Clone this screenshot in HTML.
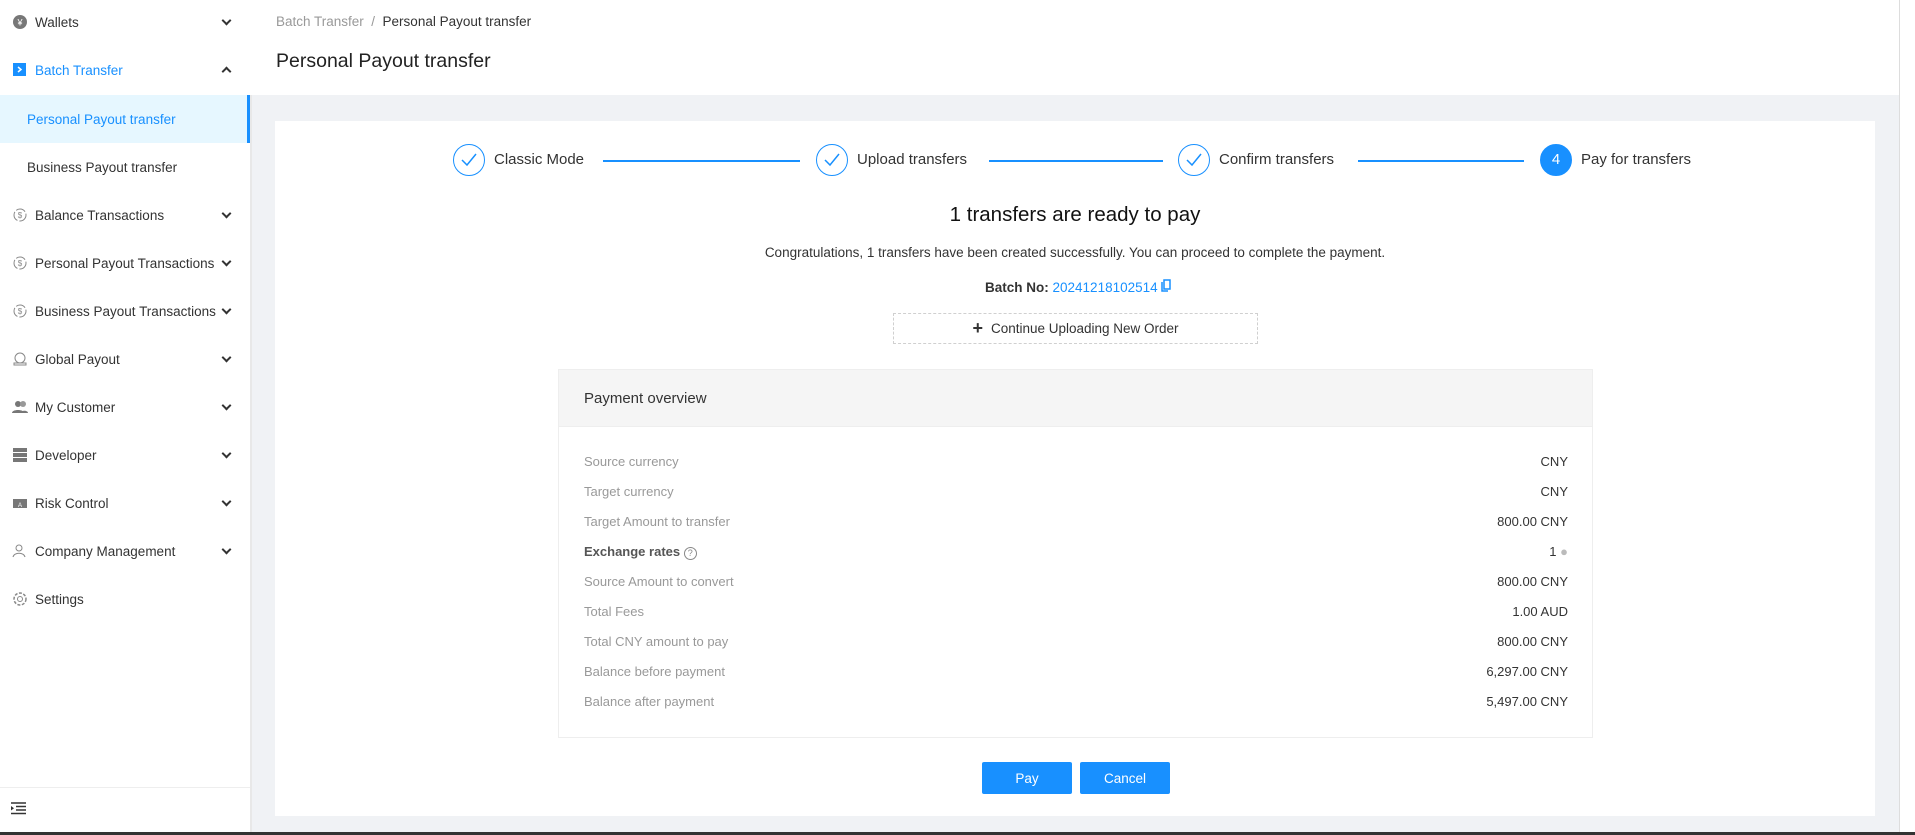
<!DOCTYPE html>
<html><head><meta charset="utf-8"><style>
*{margin:0;padding:0;box-sizing:border-box}
body{width:1915px;height:835px;overflow:hidden;background:#f0f2f5;font-family:"Liberation Sans",sans-serif;color:#262626;position:relative}
.abs{position:absolute}
#side{left:0;top:0;width:250px;height:835px;background:#fff}
.mi{position:absolute;left:0;width:250px;height:48px;display:flex;align-items:center;font-size:13.5px;color:#333}
.mi .ic{position:absolute;left:12px;width:16px;height:16px}
.mi .tx{position:absolute;left:35px}
.mi .ch{position:absolute;left:223px;top:19px;width:7px;height:7px;border-right:2px solid #333;border-bottom:2px solid #333;transform:rotate(45deg)}
.mi .ch.up{transform:rotate(-135deg);top:22px}
#hdr{left:250px;top:0;width:1649px;height:95px;background:#fff}
#card{left:275px;top:121px;width:1600px;height:695px;background:#fff}
.step{position:absolute;top:144px;width:32px;height:32px;border:1.5px solid #1890ff;border-radius:50%}
.step svg{position:absolute;left:7px;top:8px}
.sl{position:absolute;top:160px;height:1.5px;background:#1890ff}
.st{position:absolute;top:151px;font-size:15px;color:#333}
.row{position:absolute;left:584px;width:984px;font-size:13px;color:#999;display:flex;justify-content:space-between}
.row span:last-child{color:#333}
.btn{position:absolute;top:762px;width:90px;height:32px;background:#1890ff;color:#fff;font-size:13.5px;display:flex;align-items:center;justify-content:center;border-radius:2px}
</style></head><body>
<div id="side" class="abs">
 <div class="mi" style="top:-2px"><svg class="ic" viewBox="0 0 16 16"><circle cx="8" cy="8" r="7" fill="#777"/><text x="8" y="11.5" font-size="9" fill="#fff" text-anchor="middle" font-family="Liberation Sans">¥</text></svg><span class="tx">Wallets</span><span class="ch"></span></div>
 <div class="mi" style="top:46px"><svg class="ic" viewBox="0 0 16 16"><rect x="1" y="1" width="13" height="13" fill="#1890ff"/><path d="M6 5l3 2.5L6 10" stroke="#fff" stroke-width="1.5" fill="none"/></svg><span class="tx" style="color:#1890ff">Batch Transfer</span><span class="ch up"></span></div>
 <div class="mi" style="top:95px;background:#e6f7ff;border-right:3px solid #1890ff"><span class="tx" style="left:27px;color:#1890ff">Personal Payout transfer</span></div>
 <div class="mi" style="top:143px"><span class="tx" style="left:27px">Business Payout transfer</span></div>
 <div class="mi" style="top:191px"><svg class="ic" viewBox="0 0 16 16"><circle cx="8" cy="8" r="6" stroke="#888" fill="none" stroke-dasharray="10 2"/><text x="8" y="11" font-size="8" fill="#888" text-anchor="middle">$</text></svg><span class="tx">Balance Transactions</span><span class="ch"></span></div>
 <div class="mi" style="top:239px"><svg class="ic" viewBox="0 0 16 16"><circle cx="8" cy="8" r="6" stroke="#888" fill="none" stroke-dasharray="10 2"/><text x="8" y="11" font-size="8" fill="#888" text-anchor="middle">$</text></svg><span class="tx">Personal Payout Transactions</span><span class="ch"></span></div>
 <div class="mi" style="top:287px"><svg class="ic" viewBox="0 0 16 16"><circle cx="8" cy="8" r="6" stroke="#888" fill="none" stroke-dasharray="10 2"/><text x="8" y="11" font-size="8" fill="#888" text-anchor="middle">$</text></svg><span class="tx">Business Payout Transactions</span><span class="ch"></span></div>
 <div class="mi" style="top:335px"><svg class="ic" viewBox="0 0 16 16"><circle cx="8" cy="7" r="5" stroke="#888" fill="none"/><path d="M2 12h12v2H2z" stroke="#888" fill="none"/></svg><span class="tx">Global Payout</span><span class="ch"></span></div>
 <div class="mi" style="top:383px"><svg class="ic" viewBox="0 0 16 16"><circle cx="6" cy="5" r="3" fill="#777"/><circle cx="11" cy="5" r="3" fill="#999"/><path d="M0 14c0-4 12-4 12 0zM9 14c0-3 7-3 7 0z" fill="#777"/></svg><span class="tx">My Customer</span><span class="ch"></span></div>
 <div class="mi" style="top:431px"><svg class="ic" viewBox="0 0 16 16"><rect x="1" y="1" width="14" height="4" fill="#777"/><rect x="1" y="6" width="14" height="4" fill="#777"/><rect x="1" y="11" width="14" height="4" fill="#777"/></svg><span class="tx">Developer</span><span class="ch"></span></div>
 <div class="mi" style="top:479px"><svg class="ic" viewBox="0 0 16 16"><rect x="1" y="4" width="14" height="9" fill="#777"/><text x="8" y="12" font-size="6" fill="#fff" text-anchor="middle">A</text></svg><span class="tx">Risk Control</span><span class="ch"></span></div>
 <div class="mi" style="top:527px"><svg class="ic" viewBox="0 0 16 16"><circle cx="7" cy="5" r="3" stroke="#888" fill="none"/><path d="M1 14c1-5 11-5 12 0" stroke="#888" fill="none"/></svg><span class="tx">Company Management</span><span class="ch"></span></div>
 <div class="mi" style="top:575px"><svg class="ic" viewBox="0 0 16 16"><circle cx="8" cy="8" r="6" stroke="#888" stroke-width="1.5" fill="none" stroke-dasharray="3 1.5"/><circle cx="8" cy="8" r="2.5" stroke="#888" fill="none"/></svg><span class="tx">Settings</span></div>
 <div class="abs" style="left:0;top:787px;width:250px;height:1px;background:#eee"></div>
 <svg class="abs" style="left:11px;top:802px" width="16" height="13" viewBox="0 0 16 13"><path d="M0 1h15M5 4.5h10M5 8h10M0 11.5h15" stroke="#333" stroke-width="1.5"/><path d="M0 4l3 2.2L0 8.5z" fill="#333"/></svg>
</div>
<div class="abs" style="left:250px;top:0;width:2px;height:835px;background:#e8e8e8"></div>
<div id="hdr" class="abs">
 <div class="abs" style="left:26px;top:14px;font-size:13.5px;color:#999">Batch Transfer &nbsp;/&nbsp; <span style="color:#333">Personal Payout transfer</span></div>
 <div class="abs" style="left:26px;top:50px;font-size:19.5px;color:#222">Personal Payout transfer</div>
</div>
<div class="abs" style="left:1899px;top:0;width:16px;height:835px;background:#fff;border-left:1px solid #ddd"></div>
<div class="abs" style="left:0;top:832px;width:1915px;height:3px;background:#333"></div>
<div id="card" class="abs"></div>
<div class="step" style="left:453px"><svg width="16" height="14"><path d="M1 7l5 5 9-11" stroke="#1890ff" stroke-width="1.5" fill="none"/></svg></div>
<div class="st" style="left:494px">Classic Mode</div>
<div class="sl" style="left:603px;width:197px"></div>
<div class="step" style="left:816px"><svg width="16" height="14"><path d="M1 7l5 5 9-11" stroke="#1890ff" stroke-width="1.5" fill="none"/></svg></div>
<div class="st" style="left:857px">Upload transfers</div>
<div class="sl" style="left:989px;width:174px"></div>
<div class="step" style="left:1178px"><svg width="16" height="14"><path d="M1 7l5 5 9-11" stroke="#1890ff" stroke-width="1.5" fill="none"/></svg></div>
<div class="st" style="left:1219px">Confirm transfers</div>
<div class="sl" style="left:1358px;width:166px"></div>
<div class="step" style="left:1540px;background:#1890ff;color:#fff;font-size:15px;text-align:center;line-height:29px">4</div>
<div class="st" style="left:1581px">Pay for transfers</div>
<div class="abs" style="left:0;width:2150px;top:203px;text-align:center;font-size:20.5px;color:#111">1 transfers are ready to pay</div>
<div class="abs" style="left:0;width:2150px;top:245px;text-align:center;font-size:13.5px;color:#333">Congratulations, 1 transfers have been created successfully. You can proceed to complete the payment.</div>
<div class="abs" style="left:985px;top:279px;font-size:13.5px"><b style="color:#333">Batch No:</b> <span style="color:#1890ff">20241218102514</span> <svg width="10" height="13" viewBox="0 0 10 13"><rect x="3" y="1" width="6" height="9" stroke="#1890ff" fill="none" stroke-width="1.5"/><path d="M1 3v9h6" stroke="#1890ff" fill="none" stroke-width="1.5"/></svg></div>
<div class="abs" style="left:893px;top:313px;width:365px;height:31px;border:1px dashed #d0d0d0;display:flex;align-items:center;justify-content:center;font-size:13.5px;color:#333"><span style="font-size:18px;margin-right:8px;font-weight:bold">+</span>Continue Uploading New Order</div>
<div class="abs" style="left:558px;top:369px;width:1035px;height:369px;border:1px solid #eee">
 <div style="height:57px;background:#f5f5f5;border-bottom:1px solid #eee;padding-left:25px;line-height:57px;font-size:15px;color:#333">Payment overview</div>
</div>
<div class="row" style="top:454px"><span>Source currency</span><span>CNY</span></div>
<div class="row" style="top:484px"><span>Target currency</span><span>CNY</span></div>
<div class="row" style="top:514px"><span>Target Amount to transfer</span><span>800.00 CNY</span></div>
<div class="row" style="top:544px"><span style="color:#555;font-weight:bold">Exchange rates <span style="display:inline-block;width:13px;height:13px;border:1px solid #888;border-radius:50%;font-size:9px;text-align:center;line-height:11px;font-weight:normal;color:#888">?</span></span><span>1 <span style="color:#bbb">●</span></span></div>
<div class="row" style="top:574px"><span>Source Amount to convert</span><span>800.00 CNY</span></div>
<div class="row" style="top:604px"><span>Total Fees</span><span>1.00 AUD</span></div>
<div class="row" style="top:634px"><span>Total CNY amount to pay</span><span>800.00 CNY</span></div>
<div class="row" style="top:664px"><span>Balance before payment</span><span>6,297.00 CNY</span></div>
<div class="row" style="top:694px"><span>Balance after payment</span><span>5,497.00 CNY</span></div>
<div class="btn" style="left:982px">Pay</div>
<div class="btn" style="left:1080px">Cancel</div>
</body></html>
